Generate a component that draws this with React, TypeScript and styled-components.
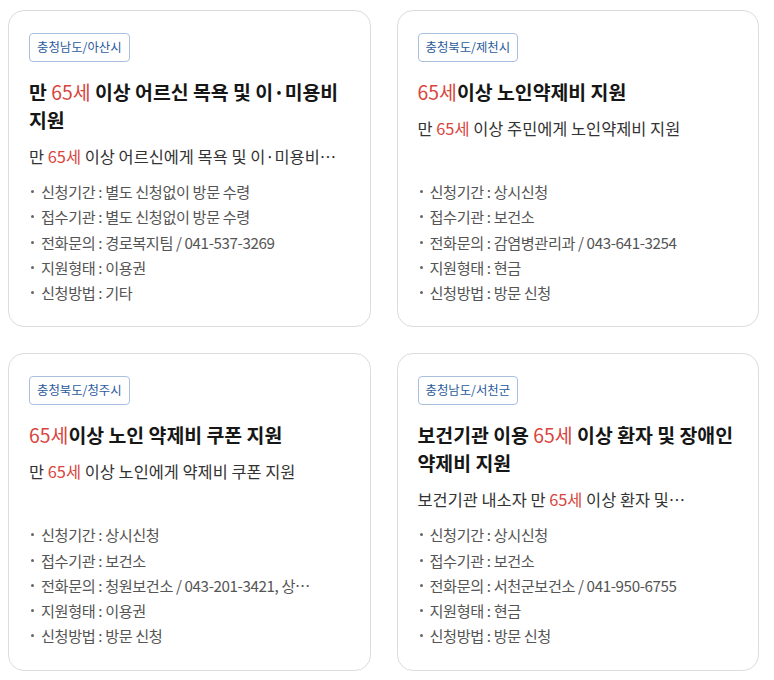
import React from 'react';
import styled, { createGlobalStyle } from 'styled-components';

const GlobalStyle = createGlobalStyle`
    body {
        margin: 0;
        background: #fff;
        font-family: "Noto Sans CJK KR", "Noto Sans", sans-serif;
        color: #222;
    }
`;

const Grid = styled.div`
    display: grid;
    grid-template-columns: 1fr 1fr;
    gap: 26px;
    width: 751px;
    padding: 10px 0 0 8px;
`;

const Card = styled.div`
    display: flex;
    flex-direction: column;
    border: 1px solid #dcdcdc;
    border-radius: 16px;
    padding: 22px 20px 21px;
    background: #fff;
`;

const Badge = styled.span`
    align-self: flex-start;
    font-size: 12.4px;
    line-height: 17px;
    padding: 5px 7px;
    color: #2b5b9c;
    border: 1px solid #a9c1df;
    border-radius: 4px;
`;

const Title = styled.h3`
    margin: 16px 0 0;
    font-size: 19.4px;
    line-height: 28px;
    font-weight: 700;
    color: #161616;
    word-break: keep-all;
`;

const Highlight = styled.span`
    color: #d8453d;
    font-weight: 400;
`;

const Desc = styled.p`
    margin: 10px 0 0;
    font-size: 16.4px;
    line-height: 24px;
    color: #333;
    white-space: nowrap;
    overflow: hidden;
`;

const InfoList = styled.ul`
    list-style: none;
    margin: auto 0 0;
    padding: 11px 0 0;
`;

const InfoItem = styled.li`
    display: flex;
    align-items: center;
    gap: 7px;
    padding-left: 2px;
    font-size: 15.2px;
    line-height: 25.25px;
    color: #555;
    letter-spacing: -0.4px;
    white-space: nowrap;

    &::before {
        content: '';
        width: 3px;
        height: 3px;
        border-radius: 50%;
        background: #666;
        flex-shrink: 0;
    }
`;

const Colon = styled.span`
    margin: 0 3px;
`;

type Info = [string, string];

interface Benefit {
    region: string;
    title: [string, string, string];
    desc: [string, string, string];
    info: Info[];
}

const benefits: Benefit[] = [
    {
        region: '충청남도/아산시',
        title: ['만 ', '65세', ' 이상 어르신 목욕 및 이·미용비 지원'],
        desc: ['만 ', '65세', ' 이상 어르신에게 목욕 및 이·미용비…'],
        info: [
            ['신청기간', '별도 신청없이 방문 수령'],
            ['접수기관', '별도 신청없이 방문 수령'],
            ['전화문의', '경로복지팀 / 041-537-3269'],
            ['지원형태', '이용권'],
            ['신청방법', '기타'],
        ],
    },
    {
        region: '충청북도/제천시',
        title: ['', '65세', '이상 노인약제비 지원'],
        desc: ['만 ', '65세', ' 이상 주민에게 노인약제비 지원'],
        info: [
            ['신청기간', '상시신청'],
            ['접수기관', '보건소'],
            ['전화문의', '감염병관리과 / 043-641-3254'],
            ['지원형태', '현금'],
            ['신청방법', '방문 신청'],
        ],
    },
    {
        region: '충청북도/청주시',
        title: ['', '65세', '이상 노인 약제비 쿠폰 지원'],
        desc: ['만 ', '65세', ' 이상 노인에게 약제비 쿠폰 지원'],
        info: [
            ['신청기간', '상시신청'],
            ['접수기관', '보건소'],
            ['전화문의', '청원보건소 / 043-201-3421, 상…'],
            ['지원형태', '이용권'],
            ['신청방법', '방문 신청'],
        ],
    },
    {
        region: '충청남도/서천군',
        title: ['보건기관 이용 ', '65세', ' 이상 환자 및 장애인 약제비 지원'],
        desc: ['보건기관 내소자 만 ', '65세', ' 이상 환자 및…'],
        info: [
            ['신청기간', '상시신청'],
            ['접수기관', '보건소'],
            ['전화문의', '서천군보건소 / 041-950-6755'],
            ['지원형태', '현금'],
            ['신청방법', '방문 신청'],
        ],
    },
];

function BenefitCard({ region, title, desc, info }: Benefit) {
    return (
        <Card>
            <Badge>{region}</Badge>
            <Title>
                {title[0]}
                <Highlight>{title[1]}</Highlight>
                {title[2]}
            </Title>
            <Desc>
                {desc[0]}
                <Highlight>{desc[1]}</Highlight>
                {desc[2]}
            </Desc>
            <InfoList>
                {info.map(([label, value]) => (
                    <InfoItem key={label}>
                        <span>
                            {label}
                            <Colon>:</Colon>
                            {value}
                        </span>
                    </InfoItem>
                ))}
            </InfoList>
        </Card>
    );
}

export default function App() {
    return (
        <>
            <GlobalStyle />
            <Grid>
                {benefits.map(b => (
                    <BenefitCard key={b.region} {...b} />
                ))}
            </Grid>
        </>
    );
}
